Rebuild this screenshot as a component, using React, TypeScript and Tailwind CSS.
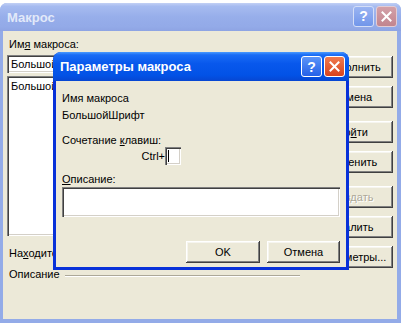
import React from "react";

function Btn({ children, className = "", disabled = false }: { children: React.ReactNode; className?: string; disabled?: boolean }) {
  return (
    <div
      className={`flex items-center justify-center bg-[#ECE9D8] shadow-[inset_-1px_-1px_#404040,inset_1px_1px_#ffffff,inset_-2px_-2px_#808080,inset_2px_2px_#f6f5ef] text-[11px] leading-[13px] ${disabled ? "text-[#ACA899] [text-shadow:1px_1px_#ffffff]" : "text-black"} ${className}`}
    >
      {children}
    </div>
  );
}

function XIcon() {
  return (
    <svg width="11" height="11" viewBox="0 0 11 11">
      <path d="M1.5 1.5 L9.5 9.5 M9.5 1.5 L1.5 9.5" stroke="#ffffff" strokeWidth="2" strokeLinecap="square" fill="none" />
    </svg>
  );
}

const sunken =
  "shadow-[inset_1px_1px_#808080,inset_2px_2px_#404040,inset_-1px_-1px_#ffffff,inset_-2px_-2px_#d4d0c8]";

export default function App() {
  return (
    <div className="relative w-[404px] h-[324px] bg-white overflow-hidden font-['Liberation_Sans',Arial,sans-serif] text-[11px] leading-[13px] text-black">
      {/* Outer (inactive) window */}
      <div className="mt-[3px] w-[401px] h-[320px] flex flex-col rounded-t-[7px] bg-[#93ABE8] overflow-hidden">
        {/* title bar */}
        <div className="h-[28px] flex items-center pl-[7px] pr-[4px] bg-[linear-gradient(to_bottom,#C2D0F5_0%,#A6BBF0_12%,#97AEEA_50%,#93AAE8_85%,#8EA4E3_100%)]">
          <span className="text-[13px] font-bold text-[#E2E9F9]">Макрос</span>
          <div className="ml-auto flex gap-[2px] mb-[2px]">
            <div className="w-[21px] h-[21px] rounded-[3px] border border-[#D4DEF7] bg-[linear-gradient(to_bottom,#9AB4F2,#7196EA)] flex items-center justify-center text-[14px] font-bold text-white leading-none">?</div>
            <div className="w-[21px] h-[21px] rounded-[3px] border border-[#E3CCD3] bg-[linear-gradient(to_bottom,#D3A0A8,#C2858F)] flex items-center justify-center">
              <XIcon />
            </div>
          </div>
        </div>
        {/* client */}
        <div className="flex-1 ml-[3px] mr-[4px] mb-[4px] bg-[#ECE9D8] flex">
          <div className="ml-[4px] w-[293px] flex flex-col">
            <div className="pl-[2px] mt-[7px]">
              Им<span className="underline">я</span> макроса:
            </div>
            <div className={`mt-[4px] h-[18px] bg-white ${sunken} flex items-center pl-[4px]`}>
              БольшойШрифт
            </div>
            <div className={`mt-[3px] h-[160px] bg-white ${sunken} pl-[4px] pt-[4px]`}>
              БольшойШрифт
            </div>
            <div className="pl-[2px] mt-[11px]">
              На<span className="underline">х</span>одится в:
            </div>
            <div className="pl-[2px] mt-[8px] flex items-center">
              <span>Описание</span>
              <div className="flex-1 ml-[5px] mt-[2px] h-[2px] border-t border-[#ACA899] border-b border-b-white"></div>
            </div>
          </div>
          <div className="ml-auto mr-[4px] w-[81px] pt-[25px] flex flex-col">
            <Btn className="h-[22px]">Выполнить</Btn>
            <Btn className="h-[22px] mt-[8px]">Отмена</Btn>
            <Btn className="h-[22px] mt-[13px]">Во<span className="underline">й</span>ти</Btn>
            <Btn className="h-[22px] mt-[8px]">Изменить</Btn>
            <Btn className="h-[22px] mt-[13px]" disabled>Создать</Btn>
            <Btn className="h-[22px] mt-[8px]">Удалить</Btn>
            <Btn className="h-[22px] mt-[8px]">Параметры...</Btn>
          </div>
        </div>
      </div>

      {/* Inner (active) dialog */}
      <div className="absolute left-[53px] top-[52px] w-[296px] h-[218px] flex flex-col rounded-t-[8px] bg-[#0831D9] overflow-hidden">
        <div className="h-[29px] flex items-center pl-[7px] pr-[4px] bg-[linear-gradient(to_bottom,#4A9BFF_0%,#1A6CF5_10%,#0858EC_40%,#0252E6_80%,#0746D2_100%)]">
          <span className="text-[13px] font-bold text-white">Параметры макроса</span>
          <div className="ml-auto flex gap-[2px]">
            <div className="w-[21px] h-[21px] rounded-[3px] border border-white bg-[linear-gradient(to_bottom,#5B94F8,#2561E8)] flex items-center justify-center text-[14px] font-bold text-white leading-none">?</div>
            <div className="w-[21px] h-[21px] rounded-[3px] border border-white bg-[linear-gradient(to_bottom,#F07A4E,#D8431E)] flex items-center justify-center">
              <XIcon />
            </div>
          </div>
        </div>
        <div className="flex-1 mx-[3px] mb-[3px] bg-[#ECE9D8] px-[6px] flex flex-col">
          <div className="mt-[11px]">Имя макроса</div>
          <div className="mt-[4px]">БольшойШрифт</div>
          <div className="mt-[12px]">
            Сочетание <span className="underline">к</span>лавиш:
          </div>
          <div className="w-[119px] flex items-center justify-end">
            <span>Ctrl+</span>
            <div className={`w-[16px] h-[18px] bg-white ${sunken} flex items-center pl-[3px]`}>
              <div className="w-[1px] h-[12px] bg-black"></div>
            </div>
          </div>
          <div className="mt-[8px]">
            <span className="underline">О</span>писание:
          </div>
          <div className={`mt-[1px] h-[30px] w-full bg-white ${sunken}`}></div>
          <div className="mt-[24px] flex justify-end gap-[7px]">
            <Btn className="w-[74px] h-[22px]">OK</Btn>
            <Btn className="w-[73px] h-[22px]">Отмена</Btn>
          </div>
        </div>
      </div>
    </div>
  );
}
